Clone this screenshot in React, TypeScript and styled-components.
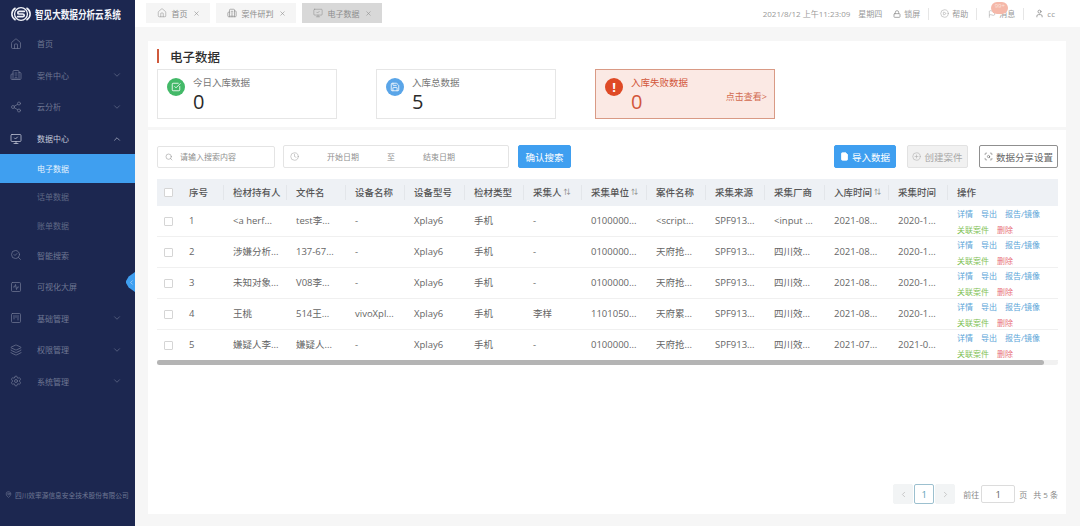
import type React from "react";
import styled, { createGlobalStyle } from "styled-components";
import {
  Building2,
  ChevronDown,
  ChevronLeft,
  ChevronRight,
  ChevronUp,
  CirclePlay,
  CirclePlus,
  Clock,
  FileText,
  Flag,
  House,
  Layers,
  Lock,
  MapPin,
  MonitorCheck,
  Save,
  ScanSearch,
  SearchCheck,
  Search,
  Settings,
  Share2,
  SquareActivity,
  SquareCheckBig,
  SquareKanban,
  User,
  X,
} from "lucide-react";

const GlobalStyle = createGlobalStyle`
  html, body {
    margin: 0;
    padding: 0;
    height: 100%;
    overflow: hidden;
    background: #f6f6f6;
    font-family: "Open Sans", "Noto Sans CJK SC", sans-serif;
  }
  * { box-sizing: border-box; }
`;

const Page = styled.div`
  display: flex;
  width: 1080px;
  height: 526px;
`;

const Sidebar = styled.aside`
  position: relative;
  width: 135px;
  flex: none;
  background: #1c2750;
  display: flex;
  flex-direction: column;
`;

const Brand = styled.div`
  height: 28px;
  display: flex;
  align-items: center;
  gap: 3px;
  padding-left: 10px;
  color: #f2f4fa;
  white-space: nowrap;

  svg {
    flex: none;
  }
`;

const BrandName = styled.span`
  display: inline-block;
  font-size: 11px;
  font-weight: 700;
  transform: scaleX(0.78);
  transform-origin: left center;
`;

const Menu = styled.nav`
  display: flex;
  flex-direction: column;
  flex: 1;
`;

const MenuRow = styled.div<{ $open?: boolean }>`
  height: 31.6px;
  display: flex;
  align-items: center;
  padding-left: 10px;
  font-size: 8px;
  color: ${({ $open }) => ($open ? "#c5cada" : "#6f7793")};

  svg {
    flex: none;
  }
`;

const MenuLabel = styled.span`
  margin-left: 15px;
  flex: 1;
`;

const MenuCaret = styled.span`
  width: 23px;
  display: flex;
`;

const SubRow = styled.div<{ $active?: boolean }>`
  height: 28.3px;
  display: flex;
  align-items: center;
  padding-left: 37px;
  font-size: 8px;
  background: ${({ $active }) => ($active ? "#3f9ff0" : "transparent")};
  color: ${({ $active }) => ($active ? "#e6f2fd" : "#5f6785")};
`;

const Company = styled.div`
  height: 35px;
  display: flex;
  align-items: flex-start;
  gap: 3px;
  padding-left: 5px;
  font-size: 6.7px;
  line-height: 9px;
  color: #6f7793;
  white-space: nowrap;
`;

const CollapseTab = styled.div`
  position: absolute;
  right: 0;
  top: 272px;
  width: 9px;
  height: 20px;
  background: #3f9ff0;
  clip-path: polygon(100% 0, 100% 100%, 30% 78%, 0 55%, 0 45%, 30% 22%);
  display: flex;
  align-items: center;
  justify-content: flex-end;
  color: #cfe6fb;
`;

const Main = styled.main`
  flex: 1;
  min-width: 0;
  display: flex;
  flex-direction: column;
`;

const TopBar = styled.header`
  height: 27px;
  background: #fff;
  display: flex;
  align-items: center;
  padding: 0 25px 0 11px;
`;

const Tabs = styled.div`
  display: flex;
  gap: 6px;
  height: 20px;
  margin-top: -1px;
`;

const Tab = styled.div<{ $active?: boolean; $width: number }>`
  width: ${({ $width }) => $width}px;
  display: flex;
  align-items: center;
  justify-content: center;
  gap: 5px;
  font-size: 8px;
  color: #8d8d8d;
  background: ${({ $active }) => ($active ? "#d8d8d8" : "#f5f5f5")};
`;

const TopInfo = styled.div`
  margin-left: auto;
  display: flex;
  align-items: center;
  font-size: 8px;
  color: #999;
  white-space: nowrap;
`;

const InfoText = styled.span`
  margin-right: 8px;

  &:nth-child(2) {
    margin-right: 0;
  }
`;

const InfoItem = styled.span`
  position: relative;
  display: flex;
  align-items: center;
  gap: 3px;
  padding: 0 8px 0 11px;
  height: 12px;
  line-height: 8px;
  border-right: 1px solid #e6e6e6;

  &:last-child {
    border-right: none;
    padding-right: 0;
  }
`;

const Badge = styled.span`
  position: absolute;
  left: 14px;
  top: -6px;
  width: 17px;
  height: 12px;
  border-radius: 6px;
  background: #f5b8a9;
  color: #fbe3dc;
  font-size: 6px;
  line-height: 8px;
  text-align: center;
`;

const Content = styled.div`
  flex: 1;
  min-height: 0;
  padding: 14px 14px 12px 13px;
  display: flex;
  flex-direction: column;
  gap: 3px;
`;

const SummaryPanel = styled.section`
  height: 86px;
  background: #fff;
  padding: 8px 9px 0;
`;

const Heading = styled.h1`
  margin: 0 0 6px;
  height: 14px;
  display: flex;
  align-items: center;
  font-size: 12.5px;
  font-weight: 500;
  color: #2e2e2e;
  border-left: 2px solid #cf5a3c;
  padding-left: 11px;
`;

const StatRow = styled.div`
  display: flex;
  gap: 39px;
`;

const StatCard = styled.div<{ $danger?: boolean }>`
  position: relative;
  width: 180px;
  height: 49.5px;
  display: flex;
  padding: 8px 0 0 9px;
  gap: 8px;
  background: ${({ $danger }) => ($danger ? "#fbe9e4" : "#fff")};
  border: 1px solid ${({ $danger }) => ($danger ? "#d99a85" : "#e6e6e6")};
`;

const StatIcon = styled.span<{ $color: string }>`
  width: 18px;
  height: 18px;
  border-radius: 50%;
  background: ${({ $color }) => $color};
  color: #fff;
  display: flex;
  align-items: center;
  justify-content: center;
  font-size: 13px;
  font-weight: 700;
  flex: none;
`;

const StatBody = styled.div<{ $danger?: boolean }>`
  margin-top: -2px;
  color: ${({ $danger }) => ($danger ? "#d2563a" : "#2a2a2a")};
`;

const StatLabel = styled.div<{ $danger?: boolean }>`
  font-size: 9.5px;
  line-height: 13px;
  color: ${({ $danger }) => ($danger ? "#d2563a" : "#777")};
`;

const StatValue = styled.div`
  font-size: 20px;
  line-height: 24px;
  margin-top: 1px;
`;

const StatLink = styled.span`
  position: absolute;
  right: 7px;
  top: 20px;
  font-size: 9px;
  color: #d2694f;
`;

const TablePanel = styled.section`
  flex: 1;
  min-height: 0;
  background: #fff;
  padding: 15px 8px 0 9px;
  display: flex;
  flex-direction: column;
`;

const Toolbar = styled.div`
  display: flex;
  align-items: center;
  height: 23px;
  margin-bottom: 11px;
`;

const SearchBox = styled.div`
  width: 118px;
  height: 22px;
  border: 1px solid #e4e4e4;
  border-radius: 2px;
  display: flex;
  align-items: center;
  gap: 7px;
  padding-left: 7px;
  font-size: 8px;
  color: #8f8f8f;
  margin-right: 8px;
`;

const DateBox = styled.div`
  width: 226px;
  height: 23px;
  border: 1px solid #e4e4e4;
  border-radius: 2px;
  display: flex;
  align-items: center;
  padding-left: 6px;
  font-size: 8px;
  color: #8f8f8f;
  margin-right: 9px;
`;

const DateValue = styled.span<{ $left: number }>`
  margin-left: ${({ $left }) => $left}px;
`;

const ActionButton = styled.button<{ $kind: "primary" | "muted" | "plain"; $width: number }>`
  width: ${({ $width }) => $width}px;
  height: 23px;
  margin: 0;
  padding: 0;
  display: flex;
  align-items: center;
  justify-content: center;
  gap: 3px;
  font: inherit;
  font-size: 9.5px;
  border-radius: 2px;
  border: 1px solid
    ${({ $kind }) => ($kind === "primary" ? "#3f9ff0" : $kind === "muted" ? "#e2e2e2" : "#8f8f8f")};
  background: ${({ $kind }) => ($kind === "primary" ? "#3f9ff0" : $kind === "muted" ? "#f1f1f1" : "#fff")};
  color: ${({ $kind }) => ($kind === "primary" ? "#fff" : $kind === "muted" ? "#a8a8a8" : "#666")};
`;

const ActionGroup = styled.div`
  margin-left: auto;
  display: flex;
  gap: 11px;
`;

const COLUMNS = "23px 44px 63px 59px 59px 60px 59px 58px 65px 59px 59px 60px 64px 59px 110px";

const HeadRow = styled.div`
  display: grid;
  grid-template-columns: ${COLUMNS};
  height: 27px;
  background: #eef1f5;
  align-items: center;
`;

const HeadCell = styled.div`
  position: relative;
  padding: 0 0 2px 9px;
  font-size: 9.5px;
  font-weight: 500;
  color: #555;
  white-space: nowrap;
  display: flex;
  align-items: center;
  gap: 2px;
  height: 100%;

  &::after {
    content: "";
    position: absolute;
    right: 0;
    top: 6px;
    bottom: 6px;
    width: 1px;
    background: #e3e6ea;
  }

  &:last-child::after {
    display: none;
  }
`;

const SortMark = styled.span`
  font-size: 7px;
  color: #8a8a8a;
  margin-top: -2px;
`;

const BodyRow = styled.div`
  display: grid;
  grid-template-columns: ${COLUMNS};
  height: 31px;
  border-bottom: 1px solid #f0f0f0;
  align-items: center;
`;

const Cell = styled.div`
  padding: 0 0 3px 9px;
  font-size: 9.5px;
  color: #666;
  white-space: nowrap;
  overflow: hidden;
`;

const CheckCell = styled.div`
  padding-left: 7px;
  display: flex;
`;

const Check = styled.span`
  width: 9px;
  height: 9px;
  background: #fff;
  border: 1px solid #d5d5d5;
  border-radius: 1px;
`;

const Ops = styled.div`
  padding-left: 9px;
  display: grid;
  grid-template-rows: 15.5px 15.5px;
  align-content: center;
  font-size: 8px;
  line-height: 15px;
  white-space: nowrap;
`;

const OpLine = styled.div`
  display: flex;
  gap: 8px;
`;

const Op = styled.span<{ $color: string }>`
  color: ${({ $color }) => $color};
`;

const ScrollTrack = styled.div`
  height: 5px;
  margin-top: -1px;
  background: #f1f1f1;
  border-radius: 3px;
`;

const ScrollThumb = styled.div`
  width: 887px;
  height: 100%;
  background: #b4b4b4;
  border-radius: 3px;
`;

const Pager = styled.div`
  margin-top: auto;
  height: 20px;
  margin-bottom: 10px;
  display: flex;
  align-items: center;
  justify-content: flex-end;
  font-size: 8px;
  color: #888;
  white-space: nowrap;
`;

const PageButton = styled.span<{ $current?: boolean }>`
  width: 20px;
  height: 20px;
  margin-right: 1px;
  display: flex;
  align-items: center;
  justify-content: center;
  font-size: 9.5px;
  border-radius: 2px;
  color: ${({ $current }) => ($current ? "#5f9fb8" : "#bbb")};
  background: ${({ $current }) => ($current ? "#fff" : "#f2f4f5")};
  border: 1px solid ${({ $current }) => ($current ? "#9cc0cf" : "#f2f4f5")};
`;

const PageInput = styled.span`
  width: 34px;
  height: 18px;
  margin: 0 4px 0 2px;
  display: flex;
  align-items: center;
  justify-content: center;
  font-size: 9.5px;
  color: #666;
  border: 1px solid #dcdcdc;
  border-radius: 2px;
`;

const PagerLead = styled.span`
  margin-left: 7px;
`;

const PagerTail = styled.span`
  margin-left: 6px;
`;

const LogoMark: React.FC = () => (
  <svg width="22" height="18" viewBox="0 0 26 20" fill="none" stroke="#f2f4fa" strokeLinecap="round">
    <path d="M6 3.2 A9.5 8.5 0 0 0 6 16.8" strokeWidth="1.8" />
    <path d="M20 3.2 A9.5 8.5 0 0 1 20 16.8" strokeWidth="1.8" />
    <ellipse cx="13" cy="10" rx="7.6" ry="7.6" strokeWidth="1.6" />
    <path d="M17 6.8 H11 Q9.2 6.8 9.2 8.4 Q9.2 10 11 10 H15 Q16.8 10 16.8 11.6 Q16.8 13.2 15 13.2 H9" strokeWidth="2" />
  </svg>
);

const MENU_ABOVE = [
  { label: "首页", icon: House, caret: false },
  { label: "案件中心", icon: Building2, caret: true },
  { label: "云分析", icon: Share2, caret: true },
];

const MENU_BELOW = [
  { label: "智能搜索", icon: SearchCheck, caret: false },
  { label: "可视化大屏", icon: SquareActivity, caret: false },
  { label: "基础管理", icon: SquareKanban, caret: true },
  { label: "权限管理", icon: Layers, caret: true },
  { label: "系统管理", icon: Settings, caret: true },
];

const HEADERS: { label: string; sort?: boolean }[] = [
  { label: "序号" },
  { label: "检材持有人" },
  { label: "文件名" },
  { label: "设备名称" },
  { label: "设备型号" },
  { label: "检材类型" },
  { label: "采集人", sort: true },
  { label: "采集单位", sort: true },
  { label: "案件名称" },
  { label: "采集来源" },
  { label: "采集厂商" },
  { label: "入库时间", sort: true },
  { label: "采集时间" },
  { label: "操作" },
];

const ROWS = [
  ["1", "<a herf...", "test李...", "-", "Xplay6", "手机", "-", "0100000...", "<script...", "SPF913...", "<input ...", "2021-08...", "2020-1..."],
  ["2", "涉嫌分析...", "137-67...", "-", "Xplay6", "手机", "-", "0100000...", "天府抢...", "SPF913...", "四川效...", "2021-08...", "2020-1..."],
  ["3", "未知对象...", "V08李...", "-", "Xplay6", "手机", "-", "0100000...", "天府抢...", "SPF913...", "四川效...", "2021-08...", "2020-1..."],
  ["4", "王桃", "514王...", "vivoXpl...", "Xplay6", "手机", "李样", "1101050...", "天府累...", "SPF913...", "四川效...", "2021-08...", "2020-1..."],
  ["5", "嫌疑人李...", "嫌疑人...", "-", "Xplay6", "手机", "-", "0100000...", "天府抢...", "SPF913...", "四川效...", "2021-07...", "2021-0..."],
];

const App: React.FC = () => (
  <Page>
    <GlobalStyle />
    <Sidebar>
      <Brand>
        <LogoMark />
        <BrandName>智见大数据分析云系统</BrandName>
      </Brand>
      <Menu>
        {MENU_ABOVE.map(({ label, icon: Icon, caret }) => (
          <MenuRow key={label}>
            <Icon size={12} strokeWidth={1.5} />
            <MenuLabel>{label}</MenuLabel>
            {caret && (
              <MenuCaret>
                <ChevronDown size={10} strokeWidth={1.5} />
              </MenuCaret>
            )}
          </MenuRow>
        ))}
        <MenuRow $open>
          <MonitorCheck size={12} strokeWidth={1.5} />
          <MenuLabel>数据中心</MenuLabel>
          <MenuCaret>
            <ChevronUp size={10} strokeWidth={1.5} />
          </MenuCaret>
        </MenuRow>
        <SubRow $active>电子数据</SubRow>
        <SubRow>话单数据</SubRow>
        <SubRow>账单数据</SubRow>
        {MENU_BELOW.map(({ label, icon: Icon, caret }) => (
          <MenuRow key={label}>
            <Icon size={12} strokeWidth={1.5} />
            <MenuLabel>{label}</MenuLabel>
            {caret && (
              <MenuCaret>
                <ChevronDown size={10} strokeWidth={1.5} />
              </MenuCaret>
            )}
          </MenuRow>
        ))}
      </Menu>
      <Company>
        <MapPin size={7} strokeWidth={2} />
        <span>四川效率源信息安全技术股份有限公司</span>
      </Company>
      <CollapseTab>
        <ChevronLeft size={7} strokeWidth={2} />
      </CollapseTab>
    </Sidebar>
    <Main>
      <TopBar>
        <Tabs>
          <Tab $width={64}>
            <House size={10} strokeWidth={1.3} />
            首页
            <X size={7} />
          </Tab>
          <Tab $width={80}>
            <Building2 size={10} strokeWidth={1.6} />
            案件研判
            <X size={7} />
          </Tab>
          <Tab $width={80} $active>
            <MonitorCheck size={10} strokeWidth={1.3} />
            电子数据
            <X size={7} />
          </Tab>
        </Tabs>
        <TopInfo>
          <InfoText>2021/8/12 上午11:23:09</InfoText>
          <InfoText>星期四</InfoText>
          <InfoItem>
            <Lock size={8} strokeWidth={2.5} />
            锁屏
          </InfoItem>
          <InfoItem>
            <CirclePlay size={9} strokeWidth={1.3} />
            帮助
          </InfoItem>
          <InfoItem>
            <Flag size={8} strokeWidth={1.5} />
            消息
            <Badge>99+</Badge>
          </InfoItem>
          <InfoItem>
            <User size={9} strokeWidth={2.5} />
            cc
          </InfoItem>
        </TopInfo>
      </TopBar>
      <Content>
        <SummaryPanel>
          <Heading>电子数据</Heading>
          <StatRow>
            <StatCard>
              <StatIcon $color="#43b968">
                <SquareCheckBig size={10} />
              </StatIcon>
              <StatBody>
                <StatLabel>今日入库数据</StatLabel>
                <StatValue>0</StatValue>
              </StatBody>
            </StatCard>
            <StatCard>
              <StatIcon $color="#5aa5e8">
                <Save size={10} />
              </StatIcon>
              <StatBody>
                <StatLabel>入库总数据</StatLabel>
                <StatValue>5</StatValue>
              </StatBody>
            </StatCard>
            <StatCard $danger>
              <StatIcon $color="#df4a26">!</StatIcon>
              <StatBody $danger>
                <StatLabel $danger>入库失败数据</StatLabel>
                <StatValue>0</StatValue>
              </StatBody>
              <StatLink>点击查看&gt;</StatLink>
            </StatCard>
          </StatRow>
        </SummaryPanel>
        <TablePanel>
          <Toolbar>
            <SearchBox>
              <Search size={8} strokeWidth={1.6} />
              请输入搜索内容
            </SearchBox>
            <DateBox>
              <Clock size={9} strokeWidth={1.2} />
              <DateValue $left={28}>开始日期</DateValue>
              <DateValue $left={28}>至</DateValue>
              <DateValue $left={28}>结束日期</DateValue>
            </DateBox>
            <ActionButton $kind="primary" $width={53}>
              确认搜索
            </ActionButton>
            <ActionGroup>
              <ActionButton $kind="primary" $width={62}>
                <FileText size={9} fill="#fff" />
                导入数据
              </ActionButton>
              <ActionButton $kind="muted" $width={61}>
                <CirclePlus size={9} strokeWidth={1.4} />
                创建案件
              </ActionButton>
              <ActionButton $kind="plain" $width={79}>
                <ScanSearch size={9} strokeWidth={1.5} />
                数据分享设置
              </ActionButton>
            </ActionGroup>
          </Toolbar>
          <HeadRow>
            <CheckCell>
              <Check />
            </CheckCell>
            {HEADERS.map(({ label, sort }) => (
              <HeadCell key={label}>
                {label}
                {sort && <SortMark>⇅</SortMark>}
              </HeadCell>
            ))}
          </HeadRow>
          {ROWS.map((row) => (
            <BodyRow key={row[0]}>
              <CheckCell>
                <Check />
              </CheckCell>
              {row.map((value, i) => (
                <Cell key={i}>{value}</Cell>
              ))}
              <Ops>
                <OpLine>
                  <Op $color="#5aa5d8">详情</Op>
                  <Op $color="#5aa5d8">导出</Op>
                  <Op $color="#5aa5d8">报告/镜像</Op>
                </OpLine>
                <OpLine>
                  <Op $color="#7fbf55">关联案件</Op>
                  <Op $color="#e8727a">删除</Op>
                </OpLine>
              </Ops>
            </BodyRow>
          ))}
          <ScrollTrack>
            <ScrollThumb />
          </ScrollTrack>
          <Pager>
            <PageButton>
              <ChevronLeft size={9} />
            </PageButton>
            <PageButton $current>1</PageButton>
            <PageButton>
              <ChevronRight size={9} />
            </PageButton>
            <PagerLead>前往</PagerLead>
            <PageInput>1</PageInput>
            页<PagerTail>共 5 条</PagerTail>
          </Pager>
        </TablePanel>
      </Content>
    </Main>
  </Page>
);

export default App;
